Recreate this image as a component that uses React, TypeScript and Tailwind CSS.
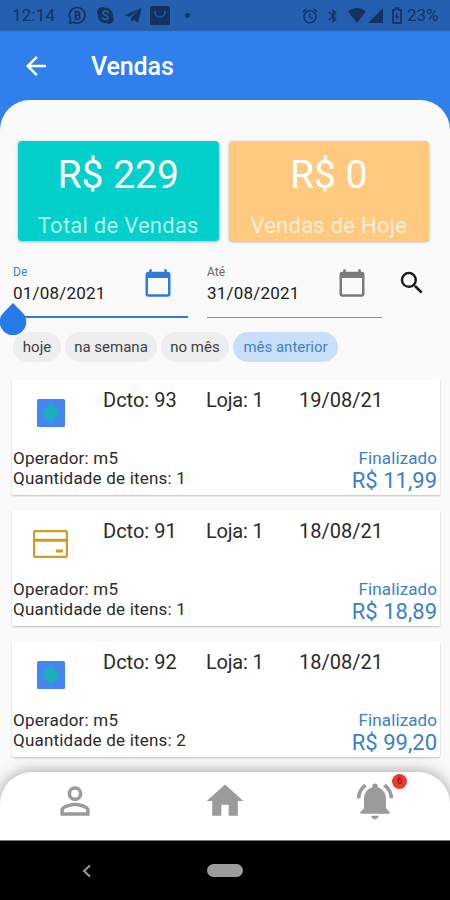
import React from "react";
import {
  MdAlarm,
  MdArrowBack,
  MdBluetooth,
  MdCalendarToday,
  MdHome,
  MdNotificationsActive,
  MdPersonOutline,
  MdSearch,
} from "react-icons/md";

type Sale = { doc: number; store: number; date: string; items: number; total: string; kind: "pix" | "card" };

const sales: Sale[] = [
  { doc: 93, store: 1, date: "19/08/21", items: 1, total: "11,99", kind: "pix" },
  { doc: 91, store: 1, date: "18/08/21", items: 1, total: "18,89", kind: "card" },
  { doc: 92, store: 1, date: "18/08/21", items: 2, total: "99,20", kind: "pix" },
];

function StatusBar() {
  return (
    <div className="flex h-[31px] items-center bg-[#2560b0] pl-3 pr-[9px] text-[#12325f]">
      <span className="w-[56px] whitespace-nowrap pt-px text-[17px] tracking-[0.2px]">12:14</span>
      <svg className="h-[19px] w-[19px]" viewBox="0 0 19 19" fill="none" stroke="currentColor" strokeWidth="1.6">
        <path d="M1.5 17.3l1-4A7.8 7.8 0 1 1 5.8 16.3z" strokeLinejoin="round" />
        <path d="M7.6 5.8v7.4h2.6a2 2 0 0 0 .2-3.9H7.8h2a1.7 1.7 0 0 0 0-3.5z" />
      </svg>
      <svg className="ml-[10px] h-[17px] w-[17px]" viewBox="0 0 17 17">
        <path
          fill="currentColor"
          d="M5 0a5 5 0 0 1 3 .8 7.5 7.5 0 0 1 7.9 8.5A4.8 4.8 0 0 1 9.300 16 7.500 7.500 0 0 1 .9 7.800 5 5 0 0 1 5 0z"
        />
        <path
          fill="none"
          stroke="#2560b0"
          strokeWidth="1.7"
          strokeLinecap="round"
          d="M11.300 5.700C10.500 3.500 5.800 3.700 5.900 6.100c.1 2.400 5.300 1.900 5.300 4.400 0 2.500-5 2.600-5.700.3"
        />
      </svg>
      <svg className="ml-[10px] h-[15px] w-[18px]" viewBox="0 0 18 15">
        <path fill="currentColor" d="M17.500.3.5 7l4.400 1.700L14 3 7 9.600v4.600l2.500-2.500 4.600 3.100z" />
      </svg>
      <svg className="ml-[8px] h-[19px] w-[20px]" viewBox="0 0 20 19">
        <rect width="20" height="19" rx="1.500" fill="currentColor" />
        <path
          fill="none"
          stroke="#2560b0"
          strokeWidth="1.300"
          strokeLinecap="round"
          d="M5 6.500c1 6.200 9 6.200 10 0"
        />
        <circle cx="5" cy="6.300" r="1" fill="#2560b0" />
        <circle cx="15" cy="6.300" r="1" fill="#2560b0" />
      </svg>
      <span className="ml-[15px] h-[5px] w-[5px] rounded-full bg-current" />
      <MdAlarm className="ml-auto h-[18px] w-[18px]" />
      <MdBluetooth className="ml-[6px] h-[18px] w-[16px]" />
      <svg className="ml-[7px] h-[15px] w-[18px]" viewBox="0 0 18 15">
        <path fill="currentColor" d="M0 3.200Q9-3 18 3.200L9 15z" />
      </svg>
      <svg className="ml-[2px] h-[15px] w-[15px]" viewBox="0 0 15 15">
        <path fill="currentColor" d="M15 0v15H0z" />
      </svg>
      <svg className="ml-[9px] h-[17px] w-[10px]" viewBox="0 0 10 17">
        <path fill="none" stroke="currentColor" strokeWidth="1.700" d="M1 2.800h2.500V1h3v1.800H9v13H1z" />
        <path fill="currentColor" d="M5.500 5 2.700 9.700h1.800V14l2.800-5H5.500z" />
      </svg>
      <span className="ml-[5px] w-[34px] whitespace-nowrap pt-px text-[17px] tracking-[-0.1px]">23%</span>
    </div>
  );
}

function TotalCard({ value, label, tone }: { value: string; label: string; tone: string }) {
  return (
    <div className={`h-[100px] flex-1 rounded-[4px] pt-[14px] text-center shadow-[0_1px_3px_rgba(0,0,0,0.3)] ${tone}`}>
      <div className="text-[39px] leading-[40px] text-white">{value}</div>
      <div className="mt-[17px] text-[22px] leading-[28px] tracking-[0.25px] text-white/70">{label}</div>
    </div>
  );
}

function DateField({ label, value, active }: { label: string; value: string; active?: boolean }) {
  return (
    <div
      className={`relative flex h-[54px] w-[175px] justify-between ${
        active ? "border-b-[2px] border-[#2f7bd8]" : "border-b border-[#8e8e8e]"
      }`}
    >
      <div className="pt-[1px]">
        <div className={`text-[12px] leading-[14px] ${active ? "text-[#3b82d0]" : "text-[#666]"}`}>{label}</div>
        <div className="mt-[5px] text-[17px] leading-[18px] tracking-[0.2px] text-[#1c1c1c]">{value}</div>
      </div>
      <MdCalendarToday
        className={`mt-[4px] h-[30px] w-[30px] ${active ? "mr-[15px] text-[#2f7bd8]" : "mr-[15px] text-[#7b7b7b]"}`}
      />
      {active && (
        <svg className="absolute left-[-14px] top-[38px] h-[34px] w-[28px]" viewBox="0 0 28 34">
          <path fill="#267be8" d="M14 1 23.400 10.400a13.300 13.300 0 1 1-18.800 0z" />
        </svg>
      )}
    </div>
  );
}

function Chip({ text, size, selected }: { text: string; size: string; selected?: boolean }) {
  return (
    <button
      className={`flex h-[30px] items-center justify-center whitespace-nowrap rounded-full text-[15px] ${size} ${
        selected ? "bg-[#c9dff9] text-[#4282c8]" : "bg-[#eeeeee] text-[#404040]"
      }`}
    >
      {text}
    </button>
  );
}

function PaymentIcon({ kind }: { kind: Sale["kind"] }) {
  if (kind === "card") {
    return (
      <svg className="h-[28px] w-[35px]" viewBox="0 0 35 28" fill="none" stroke="#cc9c27" strokeWidth="2.200">
        <rect x="1.100" y="1.100" width="32.800" height="25.800" rx="1" />
        <path d="M1 10.300h33" strokeWidth="3" />
        <path d="M23 21h7" strokeWidth="3" />
      </svg>
    );
  }
  return (
    <svg className="h-[28px] w-[28px]" viewBox="0 0 28 28">
      <rect width="28" height="28" rx="1.500" fill="#4587f2" />
      <path
        d="M12.500 5.700q1.500-1.400 3 0l6.800 6.800q1.400 1.500 0 3l-6.800 6.800q-1.500 1.400-3 0l-6.800-6.800q-1.400-1.500 0-3z"
        fill="#1bafb8"
      />
    </svg>
  );
}

function SaleCard({ sale }: { sale: Sale }) {
  return (
    <article className="flex h-[116px] flex-col justify-between rounded-[2px] bg-white pl-px pr-[3px] text-[#2b2b2b] shadow-[0_1px_2px_rgba(0,0,0,0.24)]">
      <div className="flex text-[20px] leading-[24px]">
        <div className="flex w-[90px] justify-center pr-[15px] pt-[20px]">
          <PaymentIcon kind={sale.kind} />
        </div>
        <span className="w-[103px] pt-[9px]">Dcto: {sale.doc}</span>
        <span className="w-[93px] pt-[9px] tracking-[-0.2px]">Loja: {sale.store}</span>
        <span className="pt-[9px]">{sale.date}</span>
      </div>
      <div className="flex justify-between pb-[2px]">
        <div className="text-[17px] leading-[20px] tracking-[0.2px]">
          <div>Operador: m5</div>
          <div>Quantidade de itens: {sale.items}</div>
        </div>
        <div className="text-right text-[#3b80c8]">
          <div className="text-[17px] leading-[20px] tracking-[0.1px]">Finalizado</div>
          <div className="text-[22px] leading-[25px]">R$ {sale.total}</div>
        </div>
      </div>
    </article>
  );
}

function BottomNav() {
  return (
    <nav className="relative mt-[15px] flex h-[68px] justify-between rounded-t-[32px] bg-white px-[53px] pt-[7px] text-[#9b9b9b] shadow-[0_0_16px_rgba(0,0,0,0.38)]">
      <MdPersonOutline className="h-[44px] w-[44px]" />
      <MdHome className="h-[44px] w-[44px]" />
      <div className="relative">
        <MdNotificationsActive className="h-[44px] w-[44px]" />
        <span className="absolute left-[39px] top-[-5px] flex h-[15px] w-[15px] items-center justify-center rounded-full bg-[#e83a36] text-[9px] text-[#6b1414]">
          6
        </span>
      </div>
    </nav>
  );
}

export default function App() {
  return (
    <div className="flex h-[900px] w-[450px] flex-col overflow-hidden bg-[#2f80ed] font-['Roboto',sans-serif]">
      <StatusBar />
      <header className="flex h-[69px] items-center pl-[21px] text-white">
        <MdArrowBack className="h-[30px] w-[30px]" />
        <h1 className="ml-[40px] pt-[2px] text-[25px] font-medium leading-[30px] tracking-[-0.1px]">Vendas</h1>
      </header>
      <main className="flex flex-1 flex-col rounded-t-[30px] bg-[#fafafa]">
        <section className="flex gap-[10px] pl-[18px] pr-[21px] pt-[41px]">
          <TotalCard value="R$ 229" label="Total de Vendas" tone="bg-[#03d0ca]" />
          <TotalCard value="R$ 0" label="Vendas de Hoje" tone="bg-[#ffc980]" />
        </section>
        <section className="mt-[23px] flex gap-[19px] pl-[13px]">
          <DateField label="De" value="01/08/2021" active />
          <DateField label="Até" value="31/08/2021" />
          <MdSearch className="ml-[-4px] mt-[4px] h-[30px] w-[30px] text-[#1b1b1b]" />
        </section>
        <section className="mt-[14px] flex gap-[4px] pl-[13px]">
          <Chip text="hoje" size="w-[48px]" />
          <Chip text="na semana" size="w-[92px]" />
          <Chip text="no mês" size="w-[68px]" />
          <Chip text="mês anterior" size="w-[105px]" selected />
        </section>
        <section className="mt-[17px] flex flex-col gap-[15px] pl-[12px] pr-[10px]">
          {sales.map((sale) => (
            <SaleCard key={sale.doc} sale={sale} />
          ))}
        </section>
        <BottomNav />
        <footer className="relative grid h-[60px] grid-cols-3 items-center border-t border-[#777] bg-black">
          <svg className="ml-[82px] h-[14px] w-[9px]" viewBox="0 0 9 14" fill="none" stroke="#999" strokeWidth="2">
            <path d="M8 1.500 2 7l6 5.500" />
          </svg>
          <span className="h-[13px] w-[36px] justify-self-center rounded-full bg-[#9c9c9c]" />
        </footer>
      </main>
    </div>
  );
}
